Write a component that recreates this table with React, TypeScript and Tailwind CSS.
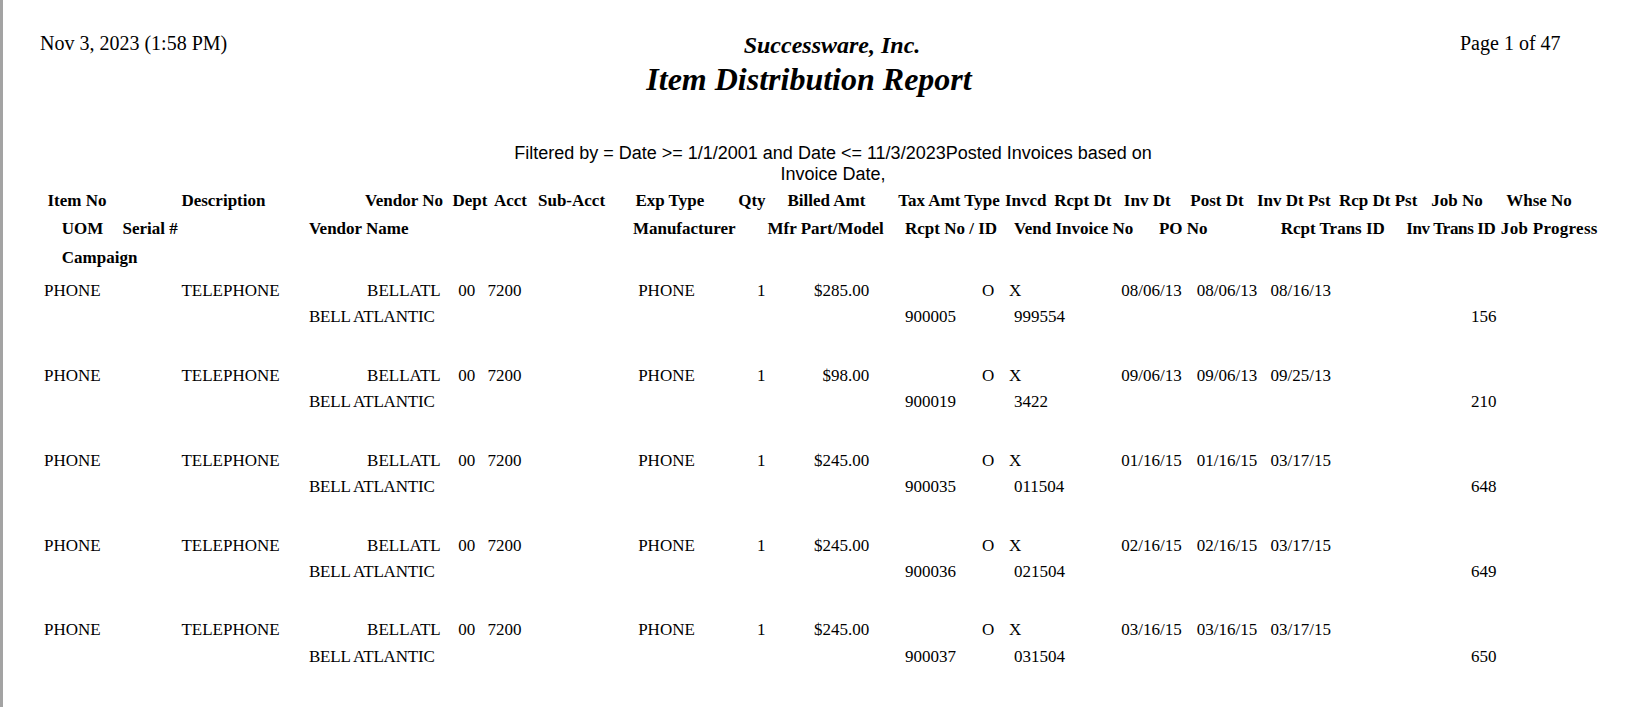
import React from 'react';

const rows = [
  { amt: '$285.00', dates: ['08/06/13', '08/06/13', '08/16/13'], rcpt: '900005', inv: '999554', job: '156' },
  { amt: '$98.00', dates: ['09/06/13', '09/06/13', '09/25/13'], rcpt: '900019', inv: '3422', job: '210' },
  { amt: '$245.00', dates: ['01/16/15', '01/16/15', '03/17/15'], rcpt: '900035', inv: '011504', job: '648' },
  { amt: '$245.00', dates: ['02/16/15', '02/16/15', '03/17/15'], rcpt: '900036', inv: '021504', job: '649' },
  { amt: '$245.00', dates: ['03/16/15', '03/16/15', '03/17/15'], rcpt: '900037', inv: '031504', job: '650' },
];

function DataRow({ r }: { r: (typeof rows)[number] }) {
  return (
    <div className="flex flex-col text-[17px] leading-[26.67px]">
      {/* line 1 */}
      <div className="flex h-[26.67px] pl-[41px]">
        <span className="w-[137.4px] shrink-0">PHONE</span>
        <span className="w-[185.7px] shrink-0">TELEPHONE</span>
        <span className="w-[91.1px] shrink-0">BELLATL</span>
        <span className="w-[29.3px] shrink-0">00</span>
        <span className="w-[150.7px] shrink-0">7200</span>
        <span className="w-[118.9px] shrink-0">PHONE</span>
        <span className="w-[12.9px] shrink-0">1</span>
        <span className="w-[99.3px] shrink-0 text-right">{r.amt}</span>
        <span className="w-[139.7px] shrink-0 pl-[112.8px]">O</span>
        <span className="w-[112.4px] shrink-0">X</span>
        <span className="w-[75.5px] shrink-0">{r.dates[0]}</span>
        <span className="w-[73.7px] shrink-0">{r.dates[1]}</span>
        <span className="shrink-0">{r.dates[2]}</span>
      </div>
      {/* line 2 */}
      <div className="flex h-[26.67px] pl-[305.9px]">
        <span className="w-[596.1px] shrink-0 tracking-[-0.2px]">BELL ATLANTIC</span>
        <span className="w-[109px] shrink-0">{r.rcpt}</span>
        <span className="w-[457px] shrink-0">{r.inv}</span>
        <span className="shrink-0">{r.job}</span>
      </div>
    </div>
  );
}

export default function App() {
  return (
    <div className="h-[707px] w-[1644px] overflow-hidden whitespace-nowrap border-l-[3px] border-[#a3a3a3] bg-white text-black font-['Liberation_Serif','Times_New_Roman',serif]">
      {/* Page header */}
      <div className="flex pl-[37px] pt-[31px]">
        <div className="w-[560px] shrink-0 text-[20px] leading-[24px]">Nov 3, 2023 (1:58 PM)</div>
        <div className="w-[464px] shrink-0 text-center font-bold italic">
          <div className="text-[24px] leading-[28px]">Successware, Inc.</div>
          <div className="mt-[2px] pr-[46px] text-[32px] leading-[36px]">Item Distribution Report</div>
        </div>
        <div className="pl-[396px] text-[20px] leading-[24px]">Page 1 of 47</div>
      </div>

      {/* Filter */}
      <div className="mt-[46px] pl-[430px]">
        <div className="w-[800px] text-center font-['Liberation_Sans',Arial,sans-serif] text-[18px] leading-[20.7px]">
          Filtered by = Date &gt;= 1/1/2001 and Date &lt;= 11/3/2023Posted Invoices based on
          <br />
          Invoice Date,
        </div>
      </div>

      {/* Column headers */}
      <div className="mt-[2.5px] flex flex-col text-[17px] font-bold leading-[28.3px]">
        <div className="flex h-[28.3px] pl-[44.5px]">
          <span className="w-[133.9px] shrink-0">Item No</span>
          <span className="w-[183.6px] shrink-0">Description</span>
          <span className="w-[87.5px] shrink-0">Vendor No</span>
          <span className="w-[41.5px] shrink-0">Dept</span>
          <span className="w-[44px] shrink-0">Acct</span>
          <span className="w-[97.4px] shrink-0">Sub-Acct</span>
          <span className="w-[102.8px] shrink-0">Exp Type</span>
          <span className="w-[49.3px] shrink-0">Qty</span>
          <span className="w-[110.7px] shrink-0">Billed Amt</span>
          <span className="w-[66.1px] shrink-0">Tax Amt</span>
          <span className="w-[40.7px] shrink-0">Type</span>
          <span className="w-[49.3px] shrink-0">Invcd</span>
          <span className="w-[69.6px] shrink-0">Rcpt Dt</span>
          <span className="w-[66.5px] shrink-0">Inv Dt</span>
          <span className="w-[66.6px] shrink-0">Post Dt</span>
          <span className="w-[82px] shrink-0">Inv Dt Pst</span>
          <span className="w-[92.4px] shrink-0">Rcp Dt Pst</span>
          <span className="w-[74.9px] shrink-0">Job No</span>
          <span className="shrink-0">Whse No</span>
        </div>
        <div className="flex h-[28.3px] pl-[58.8px]">
          <span className="w-[60.7px] shrink-0">UOM</span>
          <span className="w-[186.4px] shrink-0">Serial #</span>
          <span className="w-[324px] shrink-0">Vendor Name</span>
          <span className="w-[134.6px] shrink-0">Manufacturer</span>
          <span className="w-[137.5px] shrink-0">Mfr Part/Model</span>
          <span className="w-[109px] shrink-0">Rcpt No / ID</span>
          <span className="w-[145px] shrink-0">Vend Invoice No</span>
          <span className="w-[121.7px] shrink-0">PO No</span>
          <span className="w-[125.6px] shrink-0">Rcpt Trans ID</span>
          <span className="w-[94.6px] shrink-0 tracking-[-0.4px]">Inv Trans ID</span>
          <span className="shrink-0 tracking-[0.3px]">Job Progress</span>
        </div>
        <div className="flex h-[28.3px] pl-[58.8px]">
          <span className="shrink-0">Campaign</span>
        </div>
      </div>

      {/* Detail rows */}
      <div className="mt-[5.8px] flex flex-col gap-[31.66px]">
        {rows.map((r, i) => (
          <DataRow key={i} r={r} />
        ))}
      </div>
    </div>
  );
}
